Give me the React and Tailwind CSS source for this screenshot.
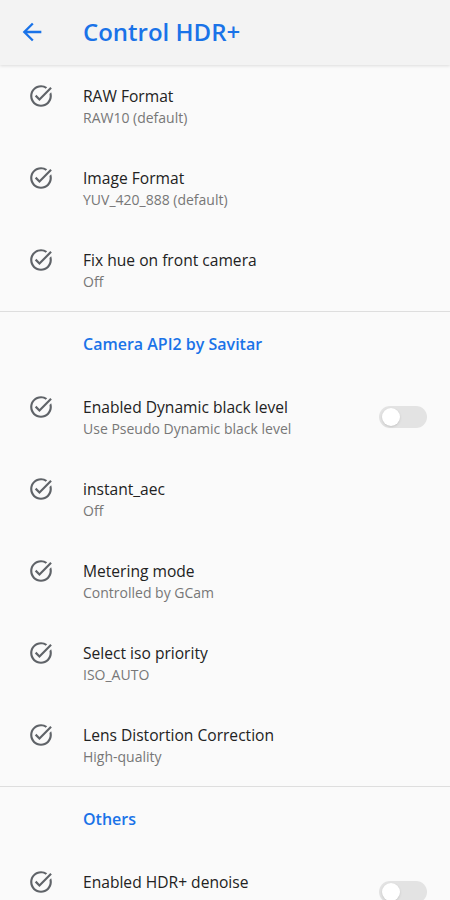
import React from 'react';

const font = { fontFamily: '"Open Sans", "Noto Sans", sans-serif' };

function TaskAlt() {
    return (
        <svg viewBox="0 0 24 24" className="h-[26px] w-[26px] fill-[#5f6368]">
            <path d="M22,5.18L10.59,16.6l-4.24-4.24l1.41-1.41l2.83,2.83l10-10L22,5.18z M19.79,10.22C19.92,10.79,20,11.39,20,12c0,4.42-3.58,8-8,8s-8-3.58-8-8c0-4.42,3.58-8,8-8c1.58,0,3.04,0.46,4.28,1.25l1.44-1.44C16.1,2.67,14.13,2,12,2C6.48,2,2,6.48,2,12c0,5.52,4.48,10,10,10s10-4.48,10-10c0-1.19-0.22-2.33-0.6-3.39L19.79,10.22z" />
        </svg>
    );
}

function Toggle() {
    return (
        <div className="relative h-[22px] w-[48px] rounded-full bg-[#e3e3e3]">
            <div className="absolute left-[3px] top-[2px] h-[18px] w-[18px] rounded-full bg-white shadow-sm" />
        </div>
    );
}

function Item({ title, summary, toggle }) {
    return (
        <div className="flex h-[82px] items-start">
            <div className="flex w-[83px] shrink-0 pl-[28px] pt-[18px]">
                <TaskAlt />
            </div>
            <div className="flex-1 pt-[20px]">
                <div className="text-[15.6px] leading-[22px] text-[#222]">{title}</div>
                <div className="h-[22px] text-[14px] leading-[22px] text-[#777]">{summary}</div>
            </div>
            {toggle && (
                <div className="pr-[23px] pt-[30px]">
                    <Toggle />
                </div>
            )}
        </div>
    );
}

function Category({ label }) {
    return (
        <div className="flex h-[64px] items-start pl-[83px] pt-[21px]">
            <span className="text-[16px] font-semibold leading-[22px] text-[#1a73e8]">{label}</span>
        </div>
    );
}

export default function App() {
    return (
        <div className="h-[900px] w-[450px] overflow-hidden bg-[#fafafa]" style={font}>
            <div className="relative z-10 flex h-[65px] items-center bg-[#f3f3f3] pb-[1px] shadow-[0_1px_3px_rgba(0,0,0,0.12)]">
                <div className="flex w-[83px] pl-[18px]">
                    <svg viewBox="0 0 24 24" className="h-[28px] w-[28px] fill-[#1a73e8]">
                        <path d="M20 11H7.83l5.59-5.59L12 4l-8 8 8 8 1.41-1.41L7.83 13H20v-2z" />
                    </svg>
                </div>
                <h1 className="text-[24px] font-semibold leading-[30px] text-[#1a73e8]">Control HDR+</h1>
            </div>
            <Item title="RAW Format" summary="RAW10 (default)" />
            <Item title="Image Format" summary="YUV_420_888 (default)" />
            <Item title="Fix hue on front camera" summary="Off" />
            <div className="h-px bg-[#dedede]" />
            <Category label="Camera API2 by Savitar" />
            <Item title="Enabled Dynamic black level" summary="Use Pseudo Dynamic black level" toggle />
            <Item title="instant_aec" summary="Off" />
            <Item title="Metering mode" summary="Controlled by GCam" />
            <Item title="Select iso priority" summary="ISO_AUTO" />
            <Item title="Lens Distortion Correction" summary="High-quality" />
            <div className="h-px bg-[#dedede]" />
            <Category label="Others" />
            <Item title="Enabled HDR+ denoise" summary="" toggle />
        </div>
    );
}
